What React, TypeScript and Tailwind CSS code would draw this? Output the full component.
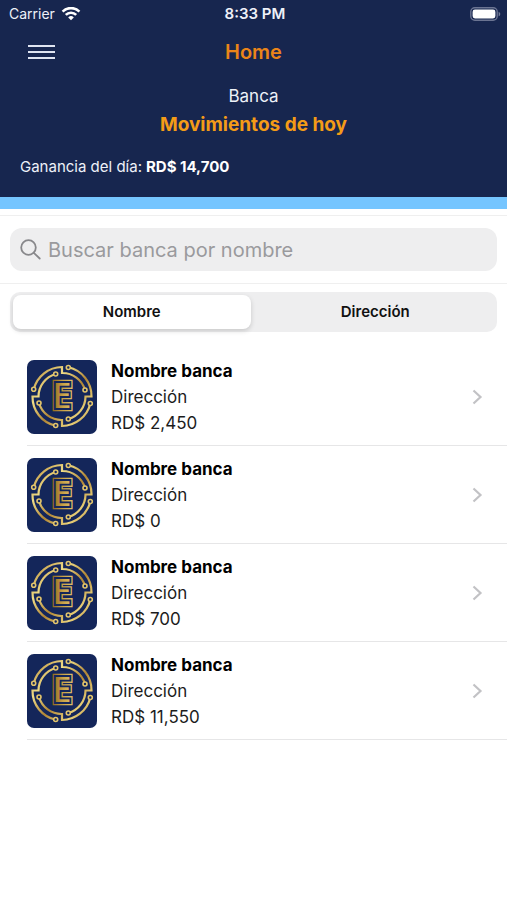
import { useState } from "react";

type Banca = { id: number; name: string; address: string; amount: string };

const bancas: Banca[] = [
  { id: 1, name: "Nombre banca", address: "Dirección", amount: "RD$ 2,450" },
  { id: 2, name: "Nombre banca", address: "Dirección", amount: "RD$ 0" },
  { id: 3, name: "Nombre banca", address: "Dirección", amount: "RD$ 700" },
  { id: 4, name: "Nombre banca", address: "Dirección", amount: "RD$ 11,550" }
];

const tabs = ["Nombre", "Dirección"];

function WifiIcon() {
  return (
    <svg width="20" height="15" viewBox="0 0 20 15" fill="none" stroke="#fff" strokeWidth="2.6" aria-hidden="true">
      <path d="M1.6 4.600a11.8 11.8 0 0 1 16.8 0" />
      <path d="M4.8 7.900a7.3 7.3 0 0 1 10.4 0" />
      <path d="M7.2 10.400a4 4 0 0 1 5.6 0L10 13.2z" fill="#fff" stroke="none" />
    </svg>
  );
}

function BatteryIcon() {
  return (
    <svg width="31" height="15" viewBox="0 0 31 15" aria-hidden="true">
      <rect x="0.8" y="0.8" width="26.4" height="12.4" rx="4" fill="none" stroke="#6b7492" strokeWidth="1.4" />
      <rect x="2.6" y="2.6" width="22.8" height="8.8" rx="2.4" fill="#fff" />
      <path d="M28.6 4.700c2.2.8 2.2 3.8 0 4.6z" fill="#747d98" />
    </svg>
  );
}

function BancaLogo() {
  return (
    <svg className="h-[74px] w-[70px] shrink-0" viewBox="0 0 70 74" aria-hidden="true">
      <defs>
        <linearGradient id="gold" gradientUnits="userSpaceOnUse" x1="6" y1="8" x2="64" y2="66">
          <stop offset="0" stopColor="#b88d3a" />
          <stop offset="0.3" stopColor="#f0dc86" />
          <stop offset="0.55" stopColor="#b08535" />
          <stop offset="0.8" stopColor="#ead27a" />
          <stop offset="1" stopColor="#a87c30" />
        </linearGradient>
        <linearGradient id="goldFlat" gradientUnits="userSpaceOnUse" x1="25" y1="0" x2="47" y2="0">
          <stop offset="0" stopColor="#8d6520" />
          <stop offset="0.5" stopColor="#c9a247" />
          <stop offset="1" stopColor="#e2c66e" />
        </linearGradient>
      </defs>
      <rect width="70" height="74" rx="7" fill="#14265a" />
      <g fill="none" stroke="url(#gold)" strokeWidth="2.2">
        <path d="M6.700 29.300A29.500 29.500 0 0 1 35 7V13A23.500 23.500 0 0 1 58 30" />
        <path d="M63.300 43.700A29.500 29.500 0 0 1 35 66V60A23.500 23.500 0 0 1 12 43" />
        <path d="M41.300 7.300A29.500 29.500 0 0 1 64.500 36.500H58.500A23.500 23.500 0 0 1 41.300 59" />
        <path d="M28.700 65.700A29.500 29.500 0 0 1 5.500 36.500H11.500A23.500 23.500 0 0 1 28.700 14" />
      </g>
      <g fill="#14265a" stroke="#e3c56c" strokeWidth="1.6">
        <circle cx="41.300" cy="7.500" r="2" />
        <circle cx="28.700" cy="14" r="2" />
        <circle cx="6.700" cy="29.300" r="2" />
        <circle cx="12" cy="43" r="2" />
        <circle cx="58" cy="30" r="2" />
        <circle cx="63.300" cy="43.500" r="2" />
        <circle cx="41.300" cy="59" r="2" />
        <circle cx="28.700" cy="65.500" r="2" />
      </g>
      <g fontFamily="'Open Sans', sans-serif" fontWeight="700" fontSize="38" textAnchor="middle" strokeLinejoin="miter">
        <text x="35" y="49" fill="url(#goldFlat)" stroke="url(#goldFlat)" strokeWidth="4.400">E</text>
        <text x="35" y="49" fill="url(#goldFlat)" stroke="#14265a" strokeWidth="1.800">E</text>
      </g>
    </svg>
  );
}

function BancaRow({ banca }: { banca: Banca }) {
  return (
    <li className="ml-[27px] border-b border-[#e6e6e7]">
      <button type="button" className="flex h-[97px] w-full items-center pr-6 text-left">
        <BancaLogo />
        <span className="ml-[14px] flex-1 text-[17px] leading-[26px] text-[#1c1c1c]">
          <span className="block font-bold text-black">{banca.name}</span>
          <span className="block">{banca.address}</span>
          <span className="block">{banca.amount}</span>
        </span>
        <svg width="11" height="16" viewBox="0 0 11 16" fill="none" stroke="#c2c2c5" strokeWidth="2.2" aria-hidden="true">
          <path d="M1.500 1.500 8.500 8l-7 6.500" />
        </svg>
      </button>
    </li>
  );
}

export default function App() {
  const [tab, setTab] = useState("Nombre");
  const [query, setQuery] = useState("");

  const visible = bancas.filter((item) => {
    const value = tab === "Nombre" ? item.name : item.address;
    return value.toLowerCase().includes(query.toLowerCase());
  });

  return (
    <div className="min-h-screen bg-white font-['Inter','Liberation_Sans',sans-serif]">
      <header className="border-b-12 border-[#75c5ff] bg-[#17264f] pb-5 text-[#eef1f8]">
        <div className="grid h-7 grid-cols-3 items-center pl-[9px] pr-[6px] text-sm">
          <div className="flex items-center gap-[6px]">Carrier <WifiIcon /></div>
          <div className="text-center text-[15px] font-semibold">8:33 PM</div>
          <div className="flex justify-end"><BatteryIcon /></div>
        </div>
        <div className="grid h-12 grid-cols-3 items-center px-7">
          <button type="button" aria-label="Menú" className="flex w-[27px] flex-col gap-1">
            <span className="h-[2px] bg-[#dfe4f1]" />
            <span className="h-[2px] bg-[#dfe4f1]" />
            <span className="h-[2px] bg-[#dfe4f1]" />
          </button>
          <h1 className="text-center text-xl font-semibold text-[#ea8519]">Home</h1>
        </div>
        <div className="pt-[6px] text-center">
          <p className="text-[17px] leading-7">Banca</p>
          <h2 className="text-[19px] font-bold leading-[30px] text-[#f49c17]">Movimientos de hoy</h2>
        </div>
        <p className="mt-4 flex gap-1 px-5 text-[15px] leading-[21px]">
          Ganancia del día: <strong className="font-bold text-white">RD$ 14,700</strong>
        </p>
      </header>

      <main className="pt-[6px]">
        <div className="border-y border-[#efefef] px-[10px] py-3">
          <label className="flex h-[43px] items-center gap-[7px] rounded-xl bg-[#eeeeef] px-[10px]">
            <svg width="21" height="21" viewBox="0 0 21 21" fill="none" stroke="#88888b" strokeWidth="1.8" strokeLinecap="round" aria-hidden="true">
              <circle cx="8.500" cy="8.500" r="7.300" />
              <path d="m13.800 13.800 5.900 5.700" />
            </svg>
            <input
              type="text"
              aria-label="Buscar banca por nombre"
              placeholder="Buscar banca por nombre"
              value={query}
              onChange={(event) => setQuery(event.target.value)}
              className="min-w-0 flex-1 bg-transparent text-xl text-black outline-none placeholder:text-[#9a9a9d]"
            />
          </label>
        </div>

        <div className="px-[10px] pt-2">
          <div className="grid h-10 grid-cols-2 rounded-[10px] bg-[#eeeeef]">
            {tabs.map((item) => (
              <button
                key={item}
                type="button"
                aria-pressed={tab === item}
                onClick={() => setTab(item)}
                className={`m-[3px] rounded-lg text-[15px] font-semibold text-[#111] ${tab === item ? "bg-white shadow-[0_2px_5px_rgba(0,0,0,0.16)]" : ""}`}
              >
                {item}
              </button>
            ))}
          </div>
        </div>

        <ul className="pt-4">
          {visible.map((item) => <BancaRow key={item.id} banca={item} />)}
        </ul>
      </main>
    </div>
  );
}
